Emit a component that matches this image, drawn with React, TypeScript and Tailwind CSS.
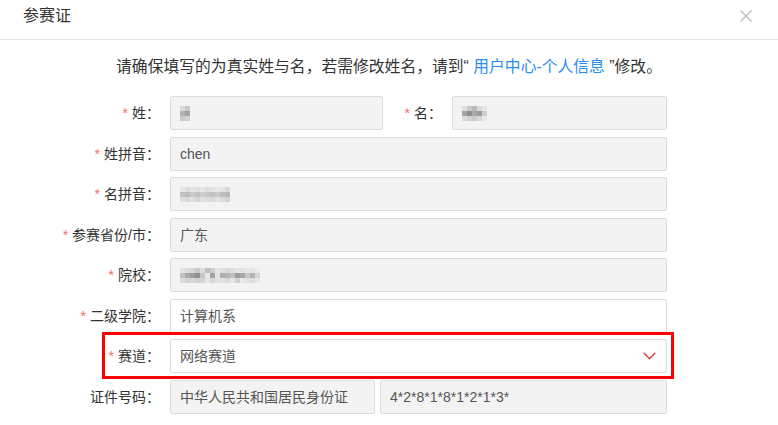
import React from "react";

const font = {
  fontFamily: '"Liberation Sans", "Noto Sans CJK SC", Arial, sans-serif',
};

function Blur({ shades }: { shades: string[][] }) {
  return (
    <div className="flex flex-col">
      {shades.map((row, i) => (
        <div key={i} className="flex">
          {row.map((c, j) => (
            <div key={j} className="w-[5px] h-[5px]" style={{ background: c }} />
          ))}
        </div>
      ))}
    </div>
  );
}

function Label({ text, req = true, w = "w-[170px]" }: { text: string; req?: boolean; w?: string }) {
  return (
    <div className={`${w} shrink-0 text-right pr-[10px] text-[14px] leading-[20px] text-[#333]`}>
      {req && <span className="text-[#f56c6c] mr-[4px]">*</span>}
      {text}：
    </div>
  );
}

function Box({
  children,
  w = "w-[497px]",
  disabled = true,
}: {
  children?: React.ReactNode;
  w?: string;
  disabled?: boolean;
}) {
  return (
    <div
      className={`${w} h-[34px] shrink-0 border border-[#dcdcdc] rounded-[2px] flex items-center pl-[9px] text-[14px] leading-[20px] text-[#555] ${
        disabled ? "bg-[#f3f3f3]" : "bg-white"
      }`}
    >
      {children}
    </div>
  );
}

export default function App() {
  return (
    <div className="w-[778px] h-[425px] bg-white overflow-hidden relative" style={font}>
      <div className="h-[40px] border-b border-[#e5e5e5] flex items-start justify-between pl-[23px] pr-[26px]">
        <div className="mt-[5px] text-[16px] leading-[22px] text-[#333]">参赛证</div>
        <svg width="12" height="12" viewBox="0 0 12 12" className="mt-[10px]">
          <path d="M0.5 0.5 L11.5 11.5 M11.5 0.5 L0.5 11.5" stroke="#b5b5b5" strokeWidth="1.1" />
        </svg>
      </div>
      <div className="pt-[17px] text-center text-[15.8px] leading-[20px] text-[#333]">
        请确保填写的为真实姓与名，若需修改姓名，请到“ <span className="text-[#2d8cf0]">用户中心-个人信息</span> ”修改。
      </div>
      <div className="mt-[19px] flex flex-col gap-[6.5px]">
        <div className="flex items-center">
          <Label text="姓" />
          <Box w="w-[213px]">
            <Blur shades={[["#d8d8d8", "#c8c8c8"], ["#b3b3b3", "#a2a2a2"], ["#c9c9c9", "#d2d2d2"]]} />
          </Box>
          <Label text="名" w="w-[69px]" />
          <Box w="w-[215px]">
            <Blur
              shades={[
                ["#e0e0e0", "#c9c9c9", "#b9b9b9", "#dadada", "#e6e6e6"],
                ["#a5a5a5", "#8f8f8f", "#a8a8a8", "#9b9b9b", "#cfcfcf"],
                ["#dcdcdc", "#d2d2d2", "#cbcbcb", "#d8d8d8", "#e8e8e8"],
              ]}
            />
          </Box>
        </div>
        <div className="flex items-center">
          <Label text="姓拼音" />
          <Box>chen</Box>
        </div>
        <div className="flex items-center">
          <Label text="名拼音" />
          <Box>
            <Blur
              shades={[
                ["#e6e6e6", "#dddddd", "#e4e4e4", "#e0e0e0", "#e6e6e6", "#dedede", "#e2e2e2", "#e8e8e8", "#e4e4e4", "#d9d9d9"],
                ["#c4c4c4", "#bdbdbd", "#cacaca", "#c1c1c1", "#cfcfcf", "#c8c8c8", "#c3c3c3", "#cdcdcd", "#bfbfbf", "#b8b8b8"],
                ["#dedede", "#d9d9d9", "#e1e1e1", "#d5d5d5", "#e0e0e0", "#dcdcdc", "#dadada", "#e2e2e2", "#dcdcdc", "#d3d3d3"],
              ]}
            />
          </Box>
        </div>
        <div className="flex items-center">
          <Label text="参赛省份/市" />
          <Box>广东</Box>
        </div>
        <div className="flex items-center">
          <Label text="院校" />
          <Box>
            <Blur
              shades={[
                ["#e4e4e4", "#dcdcdc", "#d6d6d6", "#c9c9c9", "#dcdcdc", "#bdbdbd", "#cccccc", "#e6e6e6", "#e0e0e0", "#dadada", "#dedede", "#e6e6e6", "#e2e2e2", "#e8e8e8", "#e6e6e6", "#ebebeb"],
                ["#c2c2c2", "#a9a9a9", "#9b9b9b", "#8f8f8f", "#c6c6c6", "#e8e8e8", "#a3a3a3", "#e4e4e4", "#b0b0b0", "#b7b7b7", "#c0c0c0", "#9f9f9f", "#a9a9a9", "#c8c8c8", "#b3b3b3", "#d6d6d6"],
                ["#dcdcdc", "#d2d2d2", "#d6d6d6", "#d0d0d0", "#d6d6d6", "#e6e6e6", "#d8d8d8", "#e2e2e2", "#e4e4e4", "#dadada", "#e6e6e6", "#d2d2d2", "#e8e8e8", "#e0e0e0", "#dedede", "#e8e8e8"],
              ]}
            />
          </Box>
        </div>
        <div className="flex items-center">
          <Label text="二级学院" />
          <Box disabled={false}>计算机系</Box>
        </div>
        <div className="flex items-center relative">
          <div className="absolute left-[102px] top-[-7px] w-[572px] h-[47px] border-[3px] border-[#ff0000] pointer-events-none" />
          <Label text="赛道" />
          <Box disabled={false}>
            <div className="flex-1">网络赛道</div>
            <svg width="13" height="8" viewBox="0 0 13 8" className="mr-[10px]">
              <polyline points="0.7,0.7 6.5,6.8 12.3,0.7" fill="none" stroke="#d9363e" strokeWidth="1.3" />
            </svg>
          </Box>
        </div>
        <div className="flex items-center">
          <Label text="证件号码" req={false} />
          <Box w="w-[205px]">中华人民共和国居民身份证</Box>
          <div className="w-[5px] shrink-0" />
          <Box w="w-[287px]">4*2*8*1*8*1*2*1*3*</Box>
        </div>
      </div>
    </div>
  );
}
